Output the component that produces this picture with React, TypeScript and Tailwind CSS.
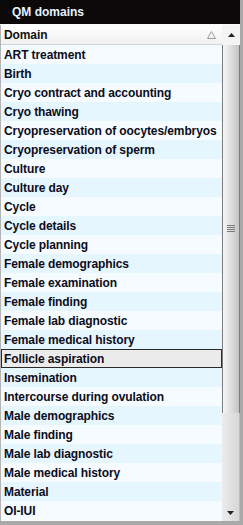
const domains = [
  "ART treatment",
  "Birth",
  "Cryo contract and accounting",
  "Cryo thawing",
  "Cryopreservation of oocytes/embryos",
  "Cryopreservation of sperm",
  "Culture",
  "Culture day",
  "Cycle",
  "Cycle details",
  "Cycle planning",
  "Female demographics",
  "Female examination",
  "Female finding",
  "Female lab diagnostic",
  "Female medical history",
  "Follicle aspiration",
  "Insemination",
  "Intercourse during ovulation",
  "Male demographics",
  "Male finding",
  "Male lab diagnostic",
  "Male medical history",
  "Material",
  "OI-IUI",
];

const selected = "Follicle aspiration";

export default function App() {
  return (
    <div className="h-[525px] w-[243px] bg-[#a9a9a9] font-['Liberation_Sans',Arial,sans-serif]">
      <div className="flex h-[521px] w-[240px] flex-col bg-[#f5fbff]">
        <div className="flex h-[24px] shrink-0 items-center bg-[#0b0809] pl-[12px] text-[12px] font-bold text-[#e6f3ff]">
          QM domains
        </div>
        <div className="flex flex-1 pt-px">
          <div className="flex w-[222px] flex-col border-l border-[#b4b4b4] tracking-[-0.1px]">
            <div className="flex h-[20px] items-center justify-between border-b border-[#d4d4d4] bg-gradient-to-b from-white to-[#f1f1f1] pl-[3px] pr-[6px] text-[12px] font-bold text-[#111]">
              <span>Domain</span>
              <svg width="9" height="8" viewBox="0 0 9 8">
                <path d="M4.5 0.5 L8.5 7.5 L0.5 7.5 Z" fill="none" stroke="#9a9a9a" strokeWidth="1" />
              </svg>
            </div>
            {domains.map((d, i) => (
              <div
                key={d}
                className={
                  d === selected
                    ? "flex h-[19px] items-center border border-[#2a2a2a] bg-[#ebebeb] pl-[2px] text-[12px] font-bold text-[#0c0c1a]"
                    : `flex h-[19px] items-center pl-[3px] text-[12px] font-bold text-[#0c0c1a] ${i % 2 === 1 ? "bg-[#e6f6ff]" : "bg-[#f5fbff]"}`
                }
              >
                {d}
              </div>
            ))}
          </div>
          <div className="flex w-[18px] flex-col bg-gradient-to-r from-[#ececec] to-[#d6d6d6]">
            <div className="flex h-[20px] items-center justify-center bg-[#f4f4f4]">
              <svg width="7" height="4" viewBox="0 0 7 4">
                <path d="M3.5 0 L7 4 L0 4 Z" fill="#222" />
              </svg>
            </div>
            <div className="flex h-[368px] items-center justify-center border-x border-[#7c7c7c] bg-gradient-to-r from-[#f6f6f6] via-[#dedede] to-[#c4c4c4]">
              <svg width="8" height="9" viewBox="0 0 8 9">
                <rect x="0" y="0" width="8" height="1" fill="#7a7a7a" />
                <rect x="0" y="2" width="8" height="1" fill="#7a7a7a" />
                <rect x="0" y="4" width="8" height="1" fill="#7a7a7a" />
                <rect x="0" y="6" width="8" height="1" fill="#7a7a7a" />
              </svg>
            </div>
            <div className="flex-1 border-r border-[#bdbdbd]" />
            <div className="flex h-[16px] items-center justify-center border-r border-[#bdbdbd]">
              <svg width="7" height="4" viewBox="0 0 7 4">
                <path d="M0 0 L7 0 L3.5 4 Z" fill="#222" />
              </svg>
            </div>
          </div>
        </div>
      </div>
    </div>
  );
}
